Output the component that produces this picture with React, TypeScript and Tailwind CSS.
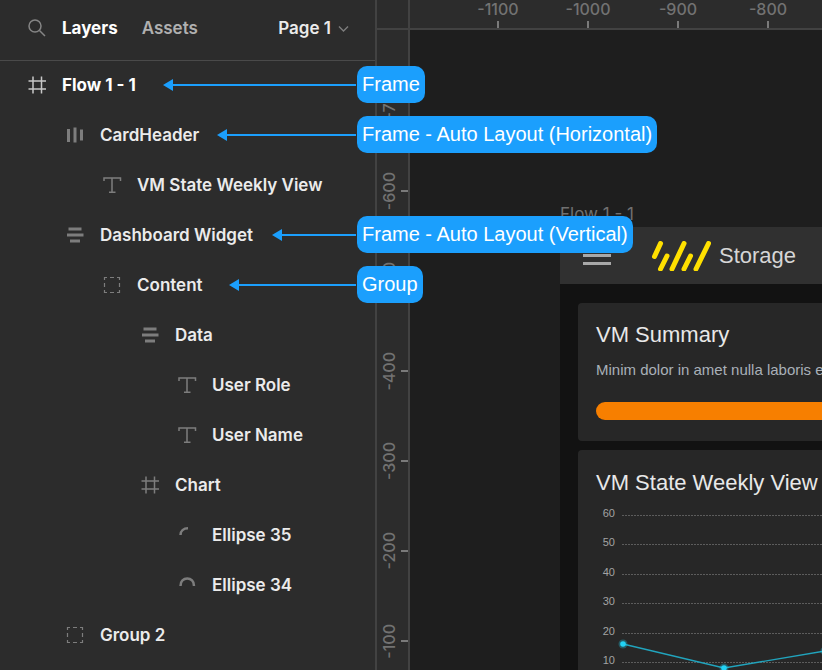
import { ReactNode } from "react";

type IconKind = "frame" | "horizontal" | "vertical" | "text" | "group" | "arcQuarter" | "arcHalf";

const shapes: Record<IconKind, ReactNode> = {
  frame: <path d="M6 1.500v17M14.500 1.500v17M1.500 6h17.500M1.500 14h17.500" strokeWidth="1.500" />,
  horizontal: <path d="M3.500 4v13M10 2.500v15M16.500 4.500v11" strokeWidth="3" />,
  vertical: <path d="M3.500 4h13M2 10h16.500M5 16h10" strokeWidth="3" />,
  text: (
    <path d="M2 6V3h16.500v3M10 3v14M7 17.250h6.500" strokeWidth="1.500" />
  ),
  group: (
    <path
      d="M2.500 5V2.500H5M8 2.500h4M15 2.500h2.500V5M17.500 8v4M17.500 15v2.500H15M12 17.500H8M5 17.500H2.500V15M2.500 12V8"
      strokeWidth="1.200"
    />
  ),
  arcQuarter: <path d="M3.500 10C3.500 6 6.500 3.200 11 3.200" strokeWidth="2.500" />,
  arcHalf: <path d="M3.500 11C3 1 17.500 1 17 11" strokeWidth="2.500" />,
};

function LayerIcon({ kind, bright }: { kind: IconKind; bright?: boolean }) {
  return (
    <svg
      viewBox="0 0 20 20"
      fill="none"
      stroke="currentColor"
      aria-hidden="true"
      className={`size-5 shrink-0 ${bright ? "text-[#c8c8c8]" : "text-[#7d7d7d]"}`}
    >
      {shapes[kind]}
    </svg>
  );
}

interface Layer {
  name: string;
  icon: IconKind;
  indent: string;
  strong?: boolean;
  note?: string;
  noteStart?: string;
}

const layers: Layer[] = [
  { name: "Flow 1 - 1", icon: "frame", indent: "pl-[27px]", strong: true, note: "Frame", noteStart: "left-[163px]" },
  { name: "CardHeader", icon: "horizontal", indent: "pl-[65px]", note: "Frame - Auto Layout (Horizontal)", noteStart: "left-[217px]" },
  { name: "VM State Weekly View", icon: "text", indent: "pl-[102px]" },
  { name: "Dashboard Widget", icon: "vertical", indent: "pl-[65px]", note: "Frame - Auto Layout (Vertical)", noteStart: "left-[272px]" },
  { name: "Content", icon: "group", indent: "pl-[102px]", note: "Group", noteStart: "left-[229px]" },
  { name: "Data", icon: "vertical", indent: "pl-[140px]" },
  { name: "User Role", icon: "text", indent: "pl-[177px]" },
  { name: "User Name", icon: "text", indent: "pl-[177px]" },
  { name: "Chart", icon: "frame", indent: "pl-[140px]" },
  { name: "Ellipse 35", icon: "arcQuarter", indent: "pl-[177px]" },
  { name: "Ellipse 34", icon: "arcHalf", indent: "pl-[177px]" },
  { name: "Group 2", icon: "group", indent: "pl-[65px]" },
];

function Callout({ text, start }: { text: string; start: string }) {
  return (
    <>
      <div className={`pointer-events-none absolute top-1.5 right-[19px] flex h-[37px] items-center ${start}`}>
        <svg viewBox="0 0 10 12" aria-hidden="true" className="h-3 w-2.5 shrink-0 fill-[#1b9ffd]">
          <path d="M0 6L10 0v12z" />
        </svg>
        <div className="h-0.5 flex-1 bg-[#1b9ffd]" />
      </div>
      <div className="absolute top-1.5 left-[357px] z-10 h-[37px] rounded-[10px] bg-[#1b9ffd] px-[5px] font-['Liberation_Sans',Arial,sans-serif] text-[20px] leading-[36px] font-normal whitespace-nowrap text-white">
        {text}
      </div>
    </>
  );
}

function LayersPanel() {
  return (
    <aside className="relative z-10 w-[377px] shrink-0 border-r-2 border-[#424242] bg-[#2c2c2c] text-[17px] font-semibold text-[#ebebeb]">
      <header className="flex h-[61px] items-center border-b border-[#4a4a4a] pr-[26px] pb-1 pl-[27px]">
        <button type="button" aria-label="Search" className="mr-[15px] text-[#858585]">
          <svg viewBox="0 0 20 20" fill="none" stroke="currentColor" strokeWidth="1.5" className="size-5">
            <circle cx="8" cy="8" r="6" />
            <path d="M12.500 12.500L18 18" />
          </svg>
        </button>
        <button type="button" className="mr-6 pt-0.5 font-bold text-white">Layers</button>
        <button type="button" className="pt-0.5 text-[#b0b0b0]">Assets</button>
        <button type="button" className="ml-auto flex items-center gap-[7px] pt-0.5">
          Page 1
          <svg viewBox="0 0 11 8" fill="none" stroke="currentColor" strokeWidth="1.4" aria-hidden="true" className="h-2 w-[11px] text-[#7d7d7d]">
            <path d="M1 1.500l4.500 4.500L10 1.500" />
          </svg>
        </button>
      </header>
      <ul className="-mt-px">
        {layers.map((l) => (
          <li key={l.name} className="relative">
            <button
              type="button"
              className={`flex h-[50px] w-full items-center gap-[15px] whitespace-nowrap ${l.indent} ${l.strong ? "font-bold text-white" : ""}`}
            >
              <LayerIcon kind={l.icon} bright={l.strong} />
              <span className="pt-0.5">{l.name}</span>
            </button>
            {l.note && l.noteStart && <Callout text={l.note} start={l.noteStart} />}
          </li>
        ))}
      </ul>
    </aside>
  );
}

function TopRuler() {
  return (
    <div className="flex h-[30px] shrink-0 overflow-hidden border-b-2 border-[#424242] bg-[#2c2c2c] pl-[43px] text-[16px] leading-[18px] font-medium text-[#727272]">
      {["-1100", "-1000", "-900", "-800"].map((v) => (
        <div key={v} className="flex w-[90px] shrink-0 flex-col items-center justify-between">
          <span>{v}</span>
          <span className="h-[7px] w-0.5 bg-[#7a7a7a]" />
        </div>
      ))}
    </div>
  );
}

function SideRuler() {
  return (
    <div className="flex w-[33px] shrink-0 flex-col border-r-2 border-[#424242] bg-[#2c2c2c] text-[16px] leading-[18px] font-medium text-[#727272]">
      <div className="h-[30px] shrink-0 border-b-2 border-[#424242]" />
      <div className="min-h-0 flex-1 overflow-hidden pt-[26px]">
        {["-700", "-600", "-500", "-400", "-300", "-200", "-100"].map((v) => (
          <div key={v} className="flex h-[90px] items-center justify-between pl-[3px]">
            <span className="rotate-180 [writing-mode:vertical-rl]">{v}</span>
            <span className="h-0.5 w-[7px] bg-[#7a7a7a]" />
          </div>
        ))}
      </div>
    </div>
  );
}

const axis = [
  { value: 60, y: 16 },
  { value: 50, y: 45 },
  { value: 40, y: 75 },
  { value: 30, y: 104 },
  { value: 20, y: 134 },
  { value: 10, y: 163 },
];

const points = [
  [45, 144],
  [146, 168],
  [247, 151],
];

function WeeklyChart() {
  return (
    <svg className="block h-[200px] w-full" role="img" aria-label="VM State Weekly View">
      {axis.map(({ value, y }) => (
        <g key={value}>
          <text x="37" y={y + 1} textAnchor="end" fontSize="11" fill="#a3a3a3">
            {value}
          </text>
          <line x1="44" x2="100%" y1={y - 0.5} y2={y - 0.5} stroke="#5c5c5c" strokeDasharray="2 1" />
        </g>
      ))}
      <polyline points={points.map((p) => p.join(",")).join(" ")} fill="none" stroke="#21a4bd" strokeWidth="1.3" />
      {points.map(([x, y]) => (
        <g key={x} fill="#22d3f5">
          <circle cx={x} cy={y} r="4.5" opacity="0.3" />
          <circle cx={x} cy={y} r="2.8" />
        </g>
      ))}
    </svg>
  );
}

function Artboard() {
  return (
    <section className="ml-[150px] pt-[173px]">
      <h2 className="h-6 text-[17px] leading-[22px] text-[#707070]">Flow 1 - 1</h2>
      <div className="bg-[#121212] font-['Liberation_Sans',Arial,sans-serif]">
        <div className="flex h-[57px] items-center bg-[#303030] pl-[23px]">
          <button type="button" aria-label="Menu" className="flex w-7 flex-col gap-[5px]">
            <span className="h-[3px] bg-[#a8a8a8]" />
            <span className="h-[3px] bg-[#a8a8a8]" />
            <span className="h-[3px] bg-[#a8a8a8]" />
          </button>
          <svg viewBox="0 0 60 30" fill="none" stroke="#ffe000" strokeWidth="5" strokeLinecap="round" aria-hidden="true" className="ml-[40px] h-[30px] w-[60px]">
            <path d="M9.500 2.500L3.500 15.500M16 15l-6.500 13M33 2.500L21 28M39.500 15L33 28M57.500 2.500L45 28" />
          </svg>
          <span className="ml-2 text-[22px] text-[#d6d6d6]">Storage</span>
        </div>
        <div className="flex flex-col gap-[9px] pt-[19px] pl-[18px]">
          <article className="h-[138px] overflow-hidden rounded-l-[4px] bg-[#272727] pt-[18px] pl-[18px]">
            <h3 className="text-[22px] leading-7 text-[#e8e8e8]">VM Summary</h3>
            <p className="mt-[11px] text-[15px] leading-5 whitespace-nowrap text-[#a9b0b8]">
              Minim dolor in amet nulla laboris enim
            </p>
            <div className="mt-[22px] h-[18px] rounded-l-full bg-[#f77f00]" />
          </article>
          <article className="overflow-hidden rounded-l-[4px] bg-[#272727] pt-[17px]">
            <h3 className="mb-px pl-[18px] text-[22px] leading-8 whitespace-nowrap text-[#e8e8e8]">VM State Weekly View</h3>
            <WeeklyChart />
          </article>
        </div>
      </div>
    </section>
  );
}

export default function App() {
  return (
    <div className="flex h-screen overflow-hidden bg-[#1e1e1e] font-[Inter,sans-serif]">
      <LayersPanel />
      <SideRuler />
      <main className="flex min-w-0 flex-1 flex-col overflow-hidden">
        <TopRuler />
        <div className="min-h-0 flex-1 overflow-hidden">
          <Artboard />
        </div>
      </main>
    </div>
  );
}
